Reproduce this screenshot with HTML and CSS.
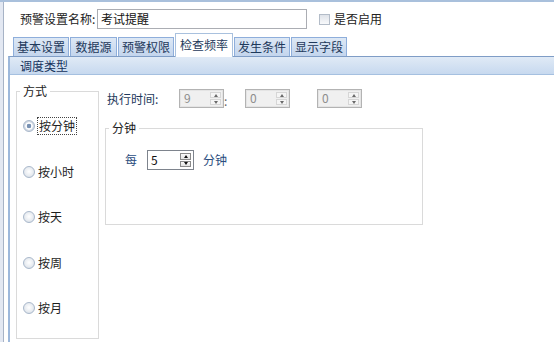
FILE: index.html
```html
<!DOCTYPE html>
<html lang="zh-CN">
<head>
    <meta charset="UTF-8">
    <meta name="viewport" content="width=device-width, initial-scale=1.0">
    <title>预警设置</title>
    <link rel="stylesheet" href="styles.css">
</head>
<body>
    <div class="frame">
        <div class="edge"></div>
        <div class="main">
            <div class="name-row">
                <span class="name-label">预警设置名称:</span>
                <div class="text-input">考试提醒</div>
                <span class="check"></span>
                <span class="check-label">是否启用</span>
            </div>

            <div class="tabs">
                <div class="tab">基本设置</div>
                <div class="tab">数据源</div>
                <div class="tab">预警权限</div>
                <div class="tab active">检查频率</div>
                <div class="tab">发生条件</div>
                <div class="tab">显示字段</div>
            </div>

            <div class="panel">
                <div class="panel-head">调度类型</div>
                <div class="panel-body">
                    <fieldset class="mode">
                        <legend>方式</legend>
                        <div class="radio-list">
                            <div class="radio-item"><span class="radio checked"></span><span class="focus">按分钟</span></div>
                            <div class="radio-item"><span class="radio"></span><span>按小时</span></div>
                            <div class="radio-item"><span class="radio"></span><span>按天</span></div>
                            <div class="radio-item"><span class="radio"></span><span>按周</span></div>
                            <div class="radio-item"><span class="radio"></span><span>按月</span></div>
                        </div>
                    </fieldset>

                    <div class="settings">
                        <div class="time-row">
                            <span class="time-label">执行时间:</span>
                            <div class="spin">
                                <span class="spin-val">9</span>
                                <span class="spin-btns"><span class="spin-btn up"></span><span class="spin-btn down"></span></span>
                            </div>
                            <span class="colon">:</span>
                            <div class="spin">
                                <span class="spin-val">0</span>
                                <span class="spin-btns"><span class="spin-btn up"></span><span class="spin-btn down"></span></span>
                            </div>
                            <div class="spin spin-last">
                                <span class="spin-val">0</span>
                                <span class="spin-btns"><span class="spin-btn up"></span><span class="spin-btn down"></span></span>
                            </div>
                        </div>

                        <fieldset class="minute">
                            <legend>分钟</legend>
                            <div class="every-row">
                                <span class="every-label">每</span>
                                <div class="spin active">
                                    <span class="spin-val">5</span>
                                    <span class="spin-btns"><span class="spin-btn up"></span><span class="spin-btn down"></span></span>
                                </div>
                                <span class="unit">分钟</span>
                            </div>
                        </fieldset>
                    </div>
                </div>
            </div>
        </div>
    </div>
</body>
</html>
```

FILE: styles.css
```css
* {
    box-sizing: border-box;
}
body {
    margin: 0;
    font-family: "Noto Sans CJK SC", "Microsoft YaHei", sans-serif;
    font-size: 12px;
    line-height: 16px;
    color: #1e1e1e;
    background: #fff;
}
.frame {
    display: flex;
    height: 342px;
    border-top: 2px solid #a9c0dc;
    overflow: hidden;
}
.edge {
    width: 4px;
    background: #e3e8f2;
    border-right: 1px solid #a7b3c6;
}
.main {
    flex: 1;
    display: flex;
    flex-direction: column;
}

/* name row */
.name-row {
    display: flex;
    align-items: center;
    height: 20px;
    margin-top: 7px;
    padding-left: 16px;
}
.name-label {
    width: 77px;
    color: #222;
}
.text-input {
    width: 210px;
    height: 20px;
    border: 1px solid #abadb3;
    padding-left: 3px;
    line-height: 18px;
    color: #111;
}
.check {
    width: 11px;
    height: 11px;
    margin-left: 12px;
    border: 1px solid #b3bcc8;
    background: linear-gradient(#dfe3e9, #f8f9fb);
}
.check-label {
    margin-left: 4px;
    color: #222;
}

/* tabs */
.tabs {
    display: flex;
    align-items: flex-end;
    height: 23px;
    margin-top: 4px;
    padding-left: 9px;
    position: relative;
    z-index: 1;
}
.tab {
    height: 19px;
    min-width: 47px;
    padding: 0 3px;
    text-align: center;
    line-height: 18px;
    color: #1e395b;
    border: 1px solid #8eaedb;
    border-bottom: none;
    background: linear-gradient(#dde8f5, #c3d5ed);
}
.tab + .tab {
    margin-left: 1px;
}
.tab.active {
    height: 24px;
    margin-bottom: -1px;
    padding: 0 4px;
    line-height: 22px;
    background: #fff;
    border-color: #a9c1de;
}

/* panel */
.panel {
    flex: 1;
    margin-left: 4px;
    display: flex;
    flex-direction: column;
    border-left: 2px solid #9db8db;
    border-top: 1px solid #7f9dc6;
}
.panel-head {
    height: 18px;
    padding-left: 10px;
    line-height: 17px;
    color: #15325c;
    background: linear-gradient(#e0eaf6, #c7d9ef);
    border-bottom: 1px solid #a5c0e0;
}
.panel-body {
    display: flex;
    gap: 6px;
    padding: 8px 0 0 6px;
}

fieldset {
    margin: 0;
    padding: 0;
    border: 1px solid #dadada;
}
legend {
    margin-left: 3px;
    padding: 0 3px;
    line-height: 16px;
    color: #222;
}

/* mode */
.mode {
    width: 83px;
    height: 256px;
}
.radio-list {
    display: flex;
    flex-direction: column;
    gap: 29.5px;
    padding: 19px 0 0 6px;
}
.radio-item {
    display: flex;
    align-items: center;
    height: 16px;
}
.radio {
    width: 12px;
    height: 12px;
    margin-right: 3px;
    border-radius: 50%;
    border: 1px solid #a9b8cb;
    background: radial-gradient(circle at 50% 45%, #fff 0, #e8ecf1 55%, #cdd5df 100%);
}
.radio.checked {
    background: radial-gradient(circle, #7891b3 0, #7891b3 2px, #fff 2.6px, #fff 3.4px, #d3dae4 4px);
}
.focus {
    outline: 1px dotted #444;
    padding: 0 1px;
}

/* settings */
.settings {
    display: flex;
    flex-direction: column;
    padding-top: 6px;
}
.time-row {
    display: flex;
    align-items: center;
    height: 19px;
}
.time-label {
    width: 74px;
    padding-left: 2px;
    color: #1e395b;
}
.spin {
    display: flex;
    width: 45px;
    height: 19px;
    border: 1px solid #b3b3b3;
    background: #f0f0f0;
    box-shadow: inset 0 0 0 1px #e4e4e4;
}
.spin-val {
    flex: 1;
    padding-left: 4px;
    line-height: 16px;
    color: #8d8d8d;
}
.spin-btns {
    display: flex;
    flex-direction: column;
    gap: 1px;
    width: 13px;
    padding: 2px 2px 2px 0;
}
.spin-btn {
    flex: 1;
    display: flex;
    align-items: center;
    justify-content: center;
    border: 1px solid #d6d6d6;
    background: #f5f5f5;
}
.spin-btn::before {
    content: "";
    border-left: 2.5px solid transparent;
    border-right: 2.5px solid transparent;
}
.spin-btn.up::before {
    border-bottom: 3px solid #6a6a6a;
}
.spin-btn.down::before {
    border-top: 3px solid #6a6a6a;
}
.colon {
    width: 21px;
    align-self: flex-end;
    line-height: 14px;
    color: #666;
}
.spin-last {
    margin-left: 27px;
}

.minute {
    width: 318px;
    height: 105px;
    margin-top: 12px;
}
.every-row {
    display: flex;
    align-items: center;
    height: 20px;
    margin-top: 14px;
    padding-left: 19px;
    color: #2b4d7e;
}
.every-label {
    margin-right: 10px;
}
.spin.active {
    width: 47px;
    height: 20px;
    background: #fff;
    border-color: #7e848d;
    box-shadow: none;
}
.spin.active .spin-val {
    color: #111;
    line-height: 18px;
    padding-left: 3px;
}
.spin.active .spin-btn {
    border-color: #8a8a8a;
    background: linear-gradient(#fafafa, #e2e2e2);
}
.spin.active .spin-btn.up::before {
    border-bottom-color: #111;
}
.spin.active .spin-btn.down::before {
    border-top-color: #111;
}
.unit {
    margin-left: 9px;
}
```
